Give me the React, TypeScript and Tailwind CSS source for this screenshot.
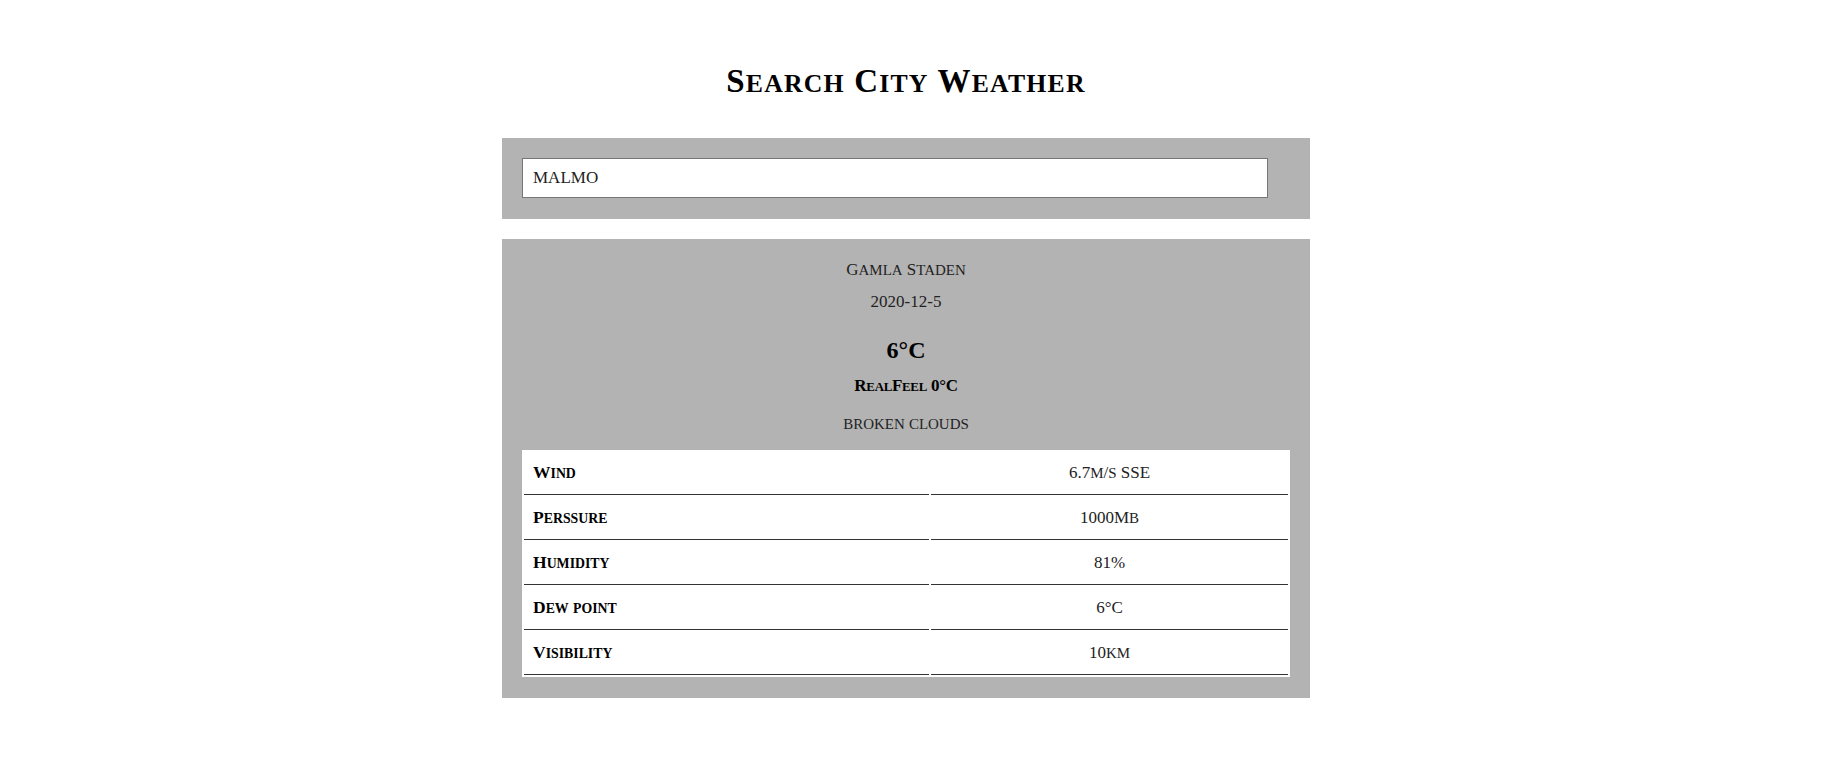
import React from "react";

const rows: [string, string][] = [
  ["Wind", "6.7m/s SSE"],
  ["Perssure", "1000Mb"],
  ["Humidity", "81%"],
  ["Dew point", "6°C"],
  ["Visibility", "10km"],
];

function SC({ t, small }: { t: string; small: string }) {
  const parts = t.split(/([a-z]+)/).filter((p) => p.length > 0);
  return (
    <>
      {parts.map((p, i) =>
        /^[a-z]+$/.test(p) ? (
          <span key={i} className={small}>
            {p.toUpperCase()}
          </span>
        ) : (
          <React.Fragment key={i}>{p}</React.Fragment>
        )
      )}
    </>
  );
}

const REG = "text-[0.88em]";
const BOLD = "text-[0.79em]";

export default function App() {
  return (
    <div className="min-h-screen bg-white font-['Liberation_Serif',serif] text-black">
      <div className="ml-[502px] w-[808px] pt-[65px]">
        <h1 className="h-[33px] text-center text-[33px] font-bold leading-[33px] tracking-[1.2px]">
          <SC t="Search City Weather" small="text-[0.78em]" />
        </h1>
        <div className="mt-[40px] bg-[#b3b3b3] px-5 pb-[21px] pt-5">
          <input
            defaultValue="MALMO"
            className="box-border h-[40px] w-[746px] border border-[#767676] bg-white px-[10px] font-['Liberation_Serif',serif] text-[17px] text-[#222] outline-none"
          />
        </div>
        <div className="mt-5 bg-[#b3b3b3] px-5 pb-[21px] pt-[19px] text-center">
          <div className="h-6 text-[17px] leading-6 text-[#222]">
            <SC t="Gamla Staden" small={REG} />
          </div>
          <div className="mt-2 h-6 text-[17px] leading-6 text-[#222]">2020-12-5</div>
          <div className="mt-5 h-8 text-[24px] font-bold leading-8">6°C</div>
          <div className="mt-2 h-6 text-[17px] font-bold leading-6 tracking-[-0.3px]">
            <SC t="RealFeel 0°C" small="text-[0.76em]" />
          </div>
          <div className="mt-[14px] h-6 text-[17px] leading-6 text-[#222]">
            <SC t="broken clouds" small={REG} />
          </div>
          <table className="mt-[14px] w-[768px] border-separate border-spacing-[2px] bg-white">
            <tbody>
              {rows.map(([k, v]) => (
                <tr key={k}>
                  <td className="h-[43px] w-[405px] border-b border-[#333] pl-[9px] text-left align-middle text-[17.5px] font-bold leading-6">
                    <SC t={k} small={BOLD} />
                  </td>
                  <td className="h-[43px] border-b border-[#333] text-center align-middle text-[17px] leading-6 text-[#222]">
                    <SC t={v} small={REG} />
                  </td>
                </tr>
              ))}
            </tbody>
          </table>
        </div>
      </div>
    </div>
  );
}
